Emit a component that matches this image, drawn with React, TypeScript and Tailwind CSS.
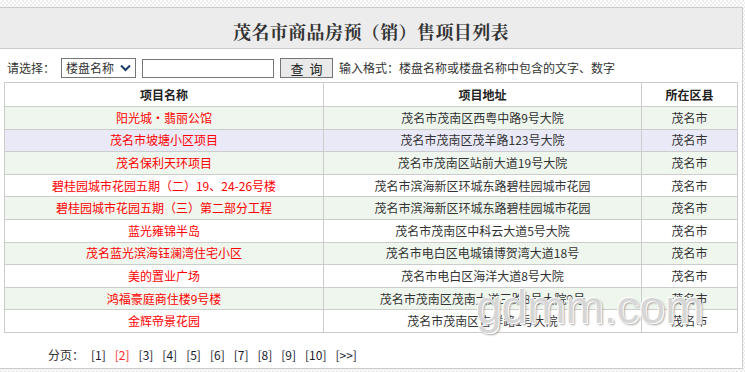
import React from 'react';

interface Project {
  name: string;
  address: string;
  area: string;
}

const projects: Project[] = [
  { name: '阳光城·翡丽公馆', address: '茂名市茂南区西粤中路9号大院', area: '茂名市' },
  { name: '茂名市坡塘小区项目', address: '茂名市茂南区茂羊路123号大院', area: '茂名市' },
  { name: '茂名保利天环项目', address: '茂名市茂南区站前大道19号大院', area: '茂名市' },
  { name: '碧桂园城市花园五期（二）19、24-26号楼', address: '茂名市滨海新区环城东路碧桂园城市花园', area: '茂名市' },
  { name: '碧桂园城市花园五期（三）第二部分工程', address: '茂名市滨海新区环城东路碧桂园城市花园', area: '茂名市' },
  { name: '蓝光雍锦半岛', address: '茂名市茂南区中科云大道5号大院', area: '茂名市' },
  { name: '茂名蓝光滨海钰澜湾住宅小区', address: '茂名市电白区电城镇博贺湾大道18号', area: '茂名市' },
  { name: '美的置业广场', address: '茂名市电白区海洋大道8号大院', area: '茂名市' },
  { name: '鸿福豪庭商住楼9号楼', address: '茂名市茂南区茂南大道三路8号大院9号', area: '茂名市' },
  { name: '金辉帝景花园', address: '茂名市茂南区吉祥路1号大院', area: '茂名市' },
];

const rowBg = (i: number) => {
  if (i === 1) return 'bg-[#e9e9f7]';
  return i % 2 === 0 ? 'bg-[#eef6ee]' : 'bg-white';
};

const pages = ['[1]', '[2]', '[3]', '[4]', '[5]', '[6]', '[7]', '[8]', '[9]', '[10]', '[>>]'];

export default function App() {
  return (
    <div className="relative w-[745px] h-[372px] overflow-hidden bg-[repeating-conic-gradient(#ececec_0_25%,#ffffff_0_50%)] bg-[length:4px_4px] font-['Noto_Sans_CJK_SC',sans-serif] text-[12px] text-[#333]">
      <div className="mt-[7px] w-[743px] h-[362px] border-t border-r border-b border-[#cccccc] bg-white flex flex-col">
        <div className="h-[41px] bg-[#ececec] border-b border-[#cccccc] flex items-center justify-center">
          <h1 className="text-[18px] font-bold text-[#333] tracking-[0.4px] mt-[7px] font-['Noto_Serif_CJK_SC','Noto_Sans_CJK_SC',serif]">
            茂名市商品房预（销）售项目列表
          </h1>
        </div>

        <div className="flex items-center h-[20px] mt-[9px] pl-[7px]">
          <span className="w-[54px]">请选择：</span>
          <div className="w-[75px] h-[20px] border border-[#767676] flex items-center justify-between px-[4px] bg-white">
            <span>楼盘名称</span>
            <svg width="11" height="8" viewBox="0 0 11 8">
              <path d="M1 1.5 L5.5 6 L10 1.5" fill="none" stroke="#1a3a6a" strokeWidth="2" />
            </svg>
          </div>
          <div className="ml-[6px] w-[132px] h-[19px] border border-[#767676] bg-white" />
          <button className="ml-[6px] w-[53px] h-[20px] border border-[#767676] bg-[#e9e9e9] text-[13px] text-[#222] leading-none">
            查&nbsp;&nbsp;询
          </button>
          <span className="ml-[6px]">输入格式：楼盘名称或楼盘名称中包含的文字、数字</span>
        </div>

        <table className="ml-[4px] mt-[4px] w-[733px] border-collapse table-fixed">
          <colgroup>
            <col className="w-[319px]" />
            <col className="w-[318px]" />
            <col className="w-[96px]" />
          </colgroup>
          <thead>
            <tr className="h-[24px]">
              <th className="border border-[#cccccc] font-bold text-[#222]">项目名称</th>
              <th className="border border-[#cccccc] font-bold text-[#222]">项目地址</th>
              <th className="border border-[#cccccc] font-bold text-[#222]">所在区县</th>
            </tr>
          </thead>
          <tbody>
            {projects.map((p, i) => (
              <tr key={i} className={`h-[22.6px] ${rowBg(i)}`}>
                <td className="border border-[#cccccc] text-center text-[#ff0000] p-0 leading-none">{p.name}</td>
                <td className="border border-[#cccccc] text-center text-[#333] p-0 leading-none whitespace-nowrap">{p.address}</td>
                <td className="border border-[#cccccc] text-center text-[#333] p-0 leading-none">{p.area}</td>
              </tr>
            ))}
          </tbody>
        </table>

        <div className="flex items-center mt-[13px] pl-[48px] gap-[9px]">
          <span className="mr-[-2px]">分页：</span>
          {pages.map((p) => (
            <span key={p} className={p === '[2]' ? 'text-[#ff2a2a]' : 'text-[#1a1a2e]'}>
              {p}
            </span>
          ))}
        </div>
      </div>

      <div className="absolute left-[476px] top-[284px] text-[46px] text-[#d6d6d6] font-['Liberation_Sans',sans-serif] leading-none [text-shadow:1px_1px_0_#ffffff,-1px_-1px_0_#ffffff,2px_2px_2px_#aaaaaa] pointer-events-none">
        gdmm.com
      </div>
    </div>
  );
}
